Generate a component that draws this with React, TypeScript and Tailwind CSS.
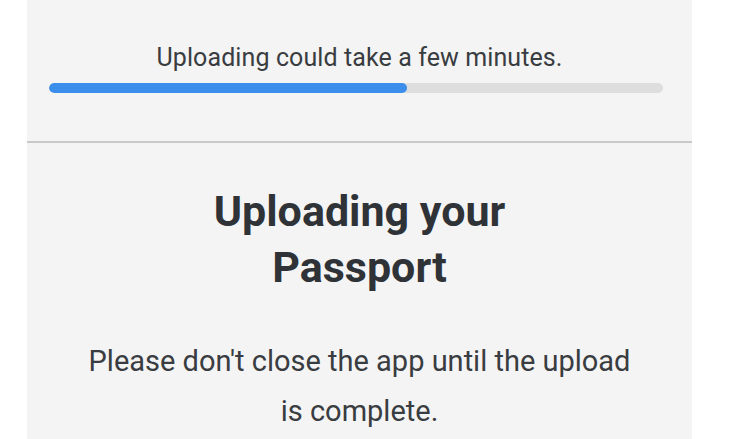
import React from "react";

export default function App() {
  return (
    <div className="w-[750px] h-[439px] bg-white overflow-hidden" style={{ fontFamily: "Roboto, 'Noto Sans', sans-serif" }}>
      <div className="ml-[27px] w-[665px] h-[439px] bg-[#f4f4f4] flex flex-col overflow-hidden">
        <div className="h-[141px] shrink-0 flex flex-col pt-[44px]">
          <p className="text-[25px] leading-[28px] text-[#393c40] text-center tracking-[0.1px]">
            Uploading could take a few minutes.
          </p>
          <div className="mt-[11px] ml-[22px] w-[614px] h-[10px] rounded-full bg-[#dddddd] overflow-hidden">
            <div className="h-full w-[358px] rounded-full bg-[#3b8eec]" />
          </div>
        </div>
        <div className="h-[2px] shrink-0 bg-[#c9c9c9]" />
        <h1 className="mt-[40px] shrink-0 text-[43px] leading-[56px] font-bold text-[#2f3337] text-center">
          Uploading your
          <br />
          Passport
        </h1>
        <p className="mt-[41px] shrink-0 text-[29px] leading-[50px] text-[#393c40] text-center">
          Please don&apos;t close the app until the upload
          <br />
          is complete.
        </p>
      </div>
    </div>
  );
}
